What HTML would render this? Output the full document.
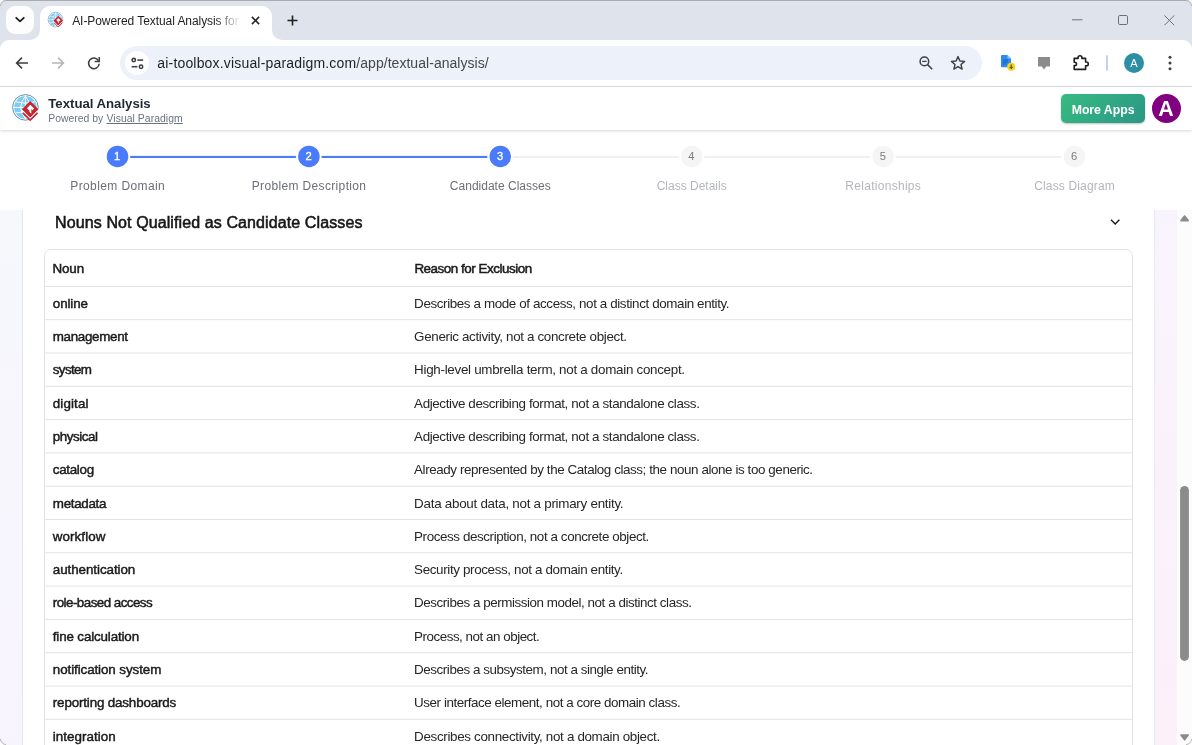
<!DOCTYPE html>
<html lang="en"><head><meta charset="utf-8"><title>AI-Powered Textual Analysis</title>
<style>
html,body{margin:0;padding:0;}
body{width:1192px;height:745px;overflow:hidden;position:relative;background:#fff;font-family:"Liberation Sans",sans-serif;}
.a{position:absolute;}
.t{position:absolute;white-space:nowrap;line-height:20px;height:20px;z-index:5;}
svg{position:absolute;overflow:visible;}
</style></head><body>
<!-- ===== browser chrome ===== -->
<div class="a" style="left:0;top:0;width:1192px;height:52px;background:#dfe3eb;"></div>
<div class="a" style="left:0;top:0;width:1192px;height:1px;background:#a9abae;"></div>
<!-- tab search button -->
<div class="a" style="left:6px;top:6px;width:28px;height:28px;border-radius:9px;background:#fdfdfe;"></div>
<svg style="left:14px;top:16px" width="12" height="8" viewBox="0 0 12 8"><path d="M2.2 1.8 L6 5.4 L9.8 1.8" fill="none" stroke="#1f1f1f" stroke-width="1.8" stroke-linecap="round" stroke-linejoin="round"/></svg>
<!-- active tab -->
<div class="a" style="left:40px;top:6px;width:232px;height:35px;background:#fff;border-radius:10px 10px 0 0;"></div>
<svg style="left:30px;top:30px" width="10" height="10" viewBox="0 0 10 10"><path d="M10 0 V10 H0 A10 10 0 0 0 10 0Z" fill="#fff"/></svg>
<svg style="left:272px;top:30px" width="10" height="10" viewBox="0 0 10 10"><path d="M0 0 V10 H10 A10 10 0 0 1 0 0Z" fill="#fff"/></svg>
<!-- toolbar -->
<div class="a" style="left:0;top:40px;width:1192px;height:46px;background:#fff;border-radius:9px 9px 0 0;"></div>
<div class="a" style="left:0;top:86px;width:1192px;height:1px;background:#dcdde0;"></div>
<!-- favicon -->
<svg style="left:0;top:0;z-index:3" width="80" height="40" viewBox="0 0 80 40"><g transform="translate(55.50 19.60) scale(0.5750)"><circle cx="0" cy="0" r="12.800" fill="#fff" stroke="#4f8398" stroke-width="0.9"/><circle cx="0" cy="0" r="11.3" fill="#7ecbf4"/><path d="M-11.3 0 H11.3 M0 -11.3 V11.3 M-9.800 -5.600 Q0 -2.800 9.800 -5.600 M-9.800 5.600 Q0 2.800 9.800 5.600 M0 -11.3 Q-9.500 0 0 11.3 M0 -11.3 Q9.500 0 0 11.3" fill="none" stroke="#fff" stroke-width="0.95"/><path d="M4.800 -7.200 L13.9 1.900 L4.800 15 L-4.300 1.900 Z" fill="#fff" opacity="0.0"/><path d="M4.800 -6.100 L12.800 1.900 L4.800 9.900 L-3.200 1.900 Z" fill="#c9242d"/><path d="M-3.600 4.300 L4.800 12.700 L13.200 4.300 L13.200 1.900 L4.800 10.300 L-3.600 1.900 Z" fill="#fff"/><path d="M4.800 -6.100 L12.800 1.900 L4.800 9.900 L-3.200 1.900 Z" fill="#c9242d"/><path d="M-2.500 5.400 L4.800 12.700 L12.100 5.400" fill="none" stroke="#c9242d" stroke-width="1.7"/><path d="M4.900 -2.600 L8.700 1.200 L7.100 2.800 L5.900 1.600 L5.900 6.300 L4.100 4.600 L4.100 3.400 L1.500 0.800 Z" fill="#fff"/></g></svg>
<!-- tab close -->
<svg style="left:251px;top:15.5px" width="9" height="9" viewBox="0 0 9 9"><path d="M0.9 0.9 L8.1 8.1 M8.1 0.9 L0.9 8.1" stroke="#1f1f1f" stroke-width="1.5" fill="none"/></svg>
<!-- fade on tab title -->
<div class="a" style="left:215px;top:10px;width:26px;height:22px;background:linear-gradient(90deg,rgba(255,255,255,0),#fff);z-index:6;"></div>
<!-- new tab plus -->
<svg style="left:286.5px;top:14.5px" width="11" height="11" viewBox="0 0 11 11"><path d="M5.5 0.5 V10.5 M0.5 5.5 H10.5" stroke="#1f1f1f" stroke-width="1.6" fill="none"/></svg>
<!-- window controls -->
<svg style="left:1071.5px;top:19px" width="11" height="2" viewBox="0 0 11 2"><path d="M0 0.8 H10.5" stroke="#6d7077" stroke-width="1"/></svg>
<svg style="left:1118px;top:15px" width="10" height="10" viewBox="0 0 10 10"><rect x="0.5" y="0.5" width="9" height="9" rx="1.3" fill="none" stroke="#6d7077" stroke-width="1"/></svg>
<svg style="left:1163.6px;top:14.6px" width="11" height="11" viewBox="0 0 11 11"><path d="M0.5 0.5 L10.2 10.2 M10.2 0.5 L0.5 10.2" stroke="#6d7077" stroke-width="1" fill="none"/></svg>
<!-- nav icons -->
<svg style="left:15px;top:56px" width="14" height="14" viewBox="0 0 14 14"><path d="M13 7 H2 M7 1.6 L1.6 7 L7 12.4" fill="none" stroke="#3c3f43" stroke-width="1.6" stroke-linejoin="miter"/></svg>
<svg style="left:51px;top:56px" width="14" height="14" viewBox="0 0 14 14"><path d="M1 7 H12 M7 1.6 L12.4 7 L7 12.4" fill="none" stroke="#b4b6ba" stroke-width="1.6"/></svg>
<svg style="left:0;top:0" width="120" height="90" viewBox="0 0 120 90"><path d="M98.500 60.700 A5.300 5.300 0 1 0 99.200 63.800" fill="none" stroke="#3c3f43" stroke-width="1.55"/><path d="M99.300 56.900 V61.500 H94.700" fill="none" stroke="#3c3f43" stroke-width="1.5"/></svg>
<!-- omnibox -->
<div class="a" style="left:120px;top:46px;width:862px;height:34px;border-radius:17px;background:#edf1fa;"></div>
<div class="a" style="left:125px;top:51px;width:24px;height:24px;border-radius:12px;background:#fff;"></div>
<svg style="left:130.5px;top:57px" width="12.8" height="12.800" viewBox="0 0 12 12"><g fill="none" stroke="#3c3f43" stroke-width="1.45"><circle cx="2.6" cy="2.9" r="1.6"/><path d="M6 2.9 H11.4"/><circle cx="9.4" cy="9.1" r="1.6"/><path d="M0.6 9.1 H6"/></g></svg>
<!-- zoom + star -->
<svg style="left:919px;top:56px" width="14" height="14" viewBox="0 0 14 14"><g fill="none" stroke="#3c3f43" stroke-width="1.5"><circle cx="5.4" cy="5.4" r="4.3"/><path d="M8.6 8.6 L13.2 13.2"/><path d="M3.2 5.4 H7.6" stroke-width="1.3"/></g></svg>
<svg style="left:950px;top:55px" width="16" height="16" viewBox="0 0 16 16"><path d="M8 1.6 L9.9 6 L14.6 6.4 L11 9.5 L12.1 14.1 L8 11.6 L3.9 14.1 L5 9.5 L1.4 6.4 L6.1 6 Z" fill="none" stroke="#3c3f43" stroke-width="1.4" stroke-linejoin="round"/></svg>
<!-- extension icons -->
<svg style="left:999px;top:54px" width="18" height="18" viewBox="0 0 18 18"><path d="M2 1.8 Q2 1 2.8 1 H8.5 L12 4.5 V12.5 Q12 13.3 11.2 13.3 H2.8 Q2 13.3 2 12.5 Z" fill="#2d8cf0"/><path d="M8.5 1 L12 4.5 H8.5Z" fill="#8cc4fb"/><path d="M3.8 6 H9 M3.8 8 H9 M3.8 10 H7" stroke="#1559a8" stroke-width="0.9"/><circle cx="12.2" cy="12.8" r="4" fill="#f7d11e"/><path d="M12.2 10.6 V14.4 M10.6 13 L12.2 14.6 L13.8 13" stroke="#333" stroke-width="1" fill="none"/></svg>
<svg style="left:1037px;top:56px" width="14" height="15" viewBox="0 0 14 15"><path d="M1 1 H13 V10.6 H9.2 L7 13.4 L4.8 10.6 H1 Z" fill="#8b8b8b"/></svg>
<svg style="left:1072px;top:54px" width="18" height="18" viewBox="0 0 18 18"><path d="M2.2 4.4 H6.1 V3.6 A1.9 1.9 0 0 1 9.9 3.6 V4.4 H13.6 V8 H14.4 A1.9 1.9 0 0 1 14.4 11.8 H13.6 V15.4 H2.2 V11.6 H2.8 A1.7 1.7 0 0 0 2.8 8.2 H2.2 Z" fill="none" stroke="#1f1f1f" stroke-width="1.6" stroke-linejoin="round"/></svg>
<div class="a" style="left:1106px;top:55px;width:2px;height:16px;background:#c4d3f5;border-radius:1px;"></div>
<div class="a" style="left:1124px;top:53px;width:20px;height:20px;border-radius:10px;background:#2d8fa3;"></div>
<svg style="left:1167.5px;top:55px" width="4" height="16" viewBox="0 0 4 16"><circle cx="2" cy="2.2" r="1.5" fill="#3c3f43"/><circle cx="2" cy="8" r="1.5" fill="#3c3f43"/><circle cx="2" cy="13.8" r="1.5" fill="#3c3f43"/></svg>

<!-- ===== app header ===== -->
<div class="a" style="left:0;top:87px;width:1192px;height:43px;background:#fff;box-shadow:0 1px 3px rgba(0,0,0,.16);z-index:2;"></div>
<svg style="left:0;top:0;z-index:3" width="60" height="130" viewBox="0 0 60 130"><g transform="translate(25.40 107.40) scale(1.0000)"><circle cx="0" cy="0" r="12.800" fill="#fff" stroke="#4f8398" stroke-width="0.9"/><circle cx="0" cy="0" r="11.3" fill="#7ecbf4"/><path d="M-11.3 0 H11.3 M0 -11.3 V11.3 M-9.800 -5.600 Q0 -2.800 9.800 -5.600 M-9.800 5.600 Q0 2.800 9.800 5.600 M0 -11.3 Q-9.500 0 0 11.3 M0 -11.3 Q9.500 0 0 11.3" fill="none" stroke="#fff" stroke-width="0.95"/><path d="M4.800 -7.200 L13.9 1.900 L4.800 15 L-4.300 1.900 Z" fill="#fff" opacity="0.0"/><path d="M4.800 -6.100 L12.800 1.900 L4.800 9.900 L-3.200 1.900 Z" fill="#c9242d"/><path d="M-3.600 4.300 L4.800 12.700 L13.200 4.300 L13.200 1.900 L4.800 10.300 L-3.600 1.900 Z" fill="#fff"/><path d="M4.800 -6.100 L12.800 1.900 L4.800 9.900 L-3.200 1.900 Z" fill="#c9242d"/><path d="M-2.500 5.400 L4.800 12.700 L12.100 5.400" fill="none" stroke="#c9242d" stroke-width="1.7"/><path d="M4.900 -2.600 L8.700 1.200 L7.100 2.800 L5.900 1.600 L5.900 6.300 L4.100 4.600 L4.100 3.400 L1.500 0.800 Z" fill="#fff"/></g></svg>
<div class="a" style="left:1061px;top:94px;width:84px;height:29px;border-radius:5px;background:linear-gradient(135deg,#38bb82,#2a9786);box-shadow:0 1px 2px rgba(0,0,0,.25);z-index:3;"></div>
<div class="a" style="left:1152px;top:94px;width:29px;height:29px;border-radius:15px;background:#800080;z-index:3;"></div>

<!-- ===== stepper ===== -->
<svg style="left:0;top:0" width="1192" height="745" viewBox="0 0 1192 745">
<rect x="130.2" y="155.9" width="165.7" height="2.1" fill="#4a7bfb"/>
<rect x="321.6" y="155.9" width="165.7" height="2.1" fill="#4a7bfb"/>
<rect x="513.0" y="155.9" width="165.7" height="2.1" fill="#f0f0f2"/>
<rect x="704.4" y="155.9" width="165.7" height="2.1" fill="#f0f0f2"/>
<rect x="895.8" y="155.9" width="165.7" height="2.1" fill="#f0f0f2"/>
<circle cx="117.5" cy="156.4" r="10.75" fill="#4a7bfb"/>
<circle cx="308.9" cy="156.4" r="10.75" fill="#4a7bfb"/>
<circle cx="500.3" cy="156.4" r="10.75" fill="#4a7bfb"/>
<circle cx="691.7" cy="156.4" r="10.75" fill="#f5f5f6"/>
<circle cx="883.1" cy="156.4" r="10.75" fill="#f5f5f6"/>
<circle cx="1074.5" cy="156.4" r="10.75" fill="#f5f5f6"/>
</svg>
<!-- ===== content ===== -->
<div class="a" style="left:0;top:210px;width:22px;height:535px;background:linear-gradient(180deg,#f6f8fc,#f8f4fe);border-right:1px solid #e1e8f2;"></div>
<div class="a" style="left:1154px;top:210px;width:23px;height:535px;background:linear-gradient(180deg,#f8f4fd,#fcf0f9);border-left:1px solid #e6e8f5;box-sizing:border-box;"></div>
<div class="a" style="left:1177px;top:210px;width:15px;height:535px;background:#fcfcfc;"></div>
<svg style="left:1179.9px;top:215.100px" width="9.2" height="6.6" viewBox="0 0 9.2 6.6"><path d="M4.6 1 L8.2 5.600 H1 Z" fill="#8b8b8b" stroke="#8b8b8b" stroke-width="1.6" stroke-linejoin="round"/></svg>
<svg style="left:1180px;top:734.200px" width="9.2" height="6.8" viewBox="0 0 9.2 6.8"><path d="M4.6 5.800 L8.2 1 H1 Z" fill="#8b8b8b" stroke="#8b8b8b" stroke-width="1.6" stroke-linejoin="round"/></svg>
<svg style="left:0;top:0" width="1192" height="745"><rect x="1180.100" y="485.9" width="8.8" height="175" rx="4.4" fill="#8b8b8b"/></svg>
<!-- chevron -->
<svg style="left:1110px;top:218.9px" width="11" height="7" viewBox="0 0 11 7"><path d="M1.500 1.300 L5.200 5 L8.900 1.300" fill="none" stroke="#161616" stroke-width="1.35" stroke-linecap="square" stroke-linejoin="miter"/></svg>
<!-- table -->
<div class="a" style="left:44px;top:249px;width:1089px;height:520px;border:1px solid #e3e4e7;border-radius:7px;box-sizing:border-box;"></div>
<svg style="left:0;top:0" width="1192" height="745" viewBox="0 0 1192 745"><rect x="45" y="285.90" width="1087" height="1" fill="#e2e3e7"/><rect x="45" y="319.20" width="1087" height="1" fill="#e2e3e7"/><rect x="45" y="352.50" width="1087" height="1" fill="#e2e3e7"/><rect x="45" y="385.80" width="1087" height="1" fill="#e2e3e7"/><rect x="45" y="419.10" width="1087" height="1" fill="#e2e3e7"/><rect x="45" y="452.40" width="1087" height="1" fill="#e2e3e7"/><rect x="45" y="485.70" width="1087" height="1" fill="#e2e3e7"/><rect x="45" y="519.00" width="1087" height="1" fill="#e2e3e7"/><rect x="45" y="552.30" width="1087" height="1" fill="#e2e3e7"/><rect x="45" y="585.60" width="1087" height="1" fill="#e2e3e7"/><rect x="45" y="618.90" width="1087" height="1" fill="#e2e3e7"/><rect x="45" y="652.20" width="1087" height="1" fill="#e2e3e7"/><rect x="45" y="685.50" width="1087" height="1" fill="#e2e3e7"/><rect x="45" y="718.80" width="1087" height="1" fill="#e2e3e7"/></svg>
<!-- window corners -->
<svg style="left:0;top:0;z-index:9" width="1192" height="745" viewBox="0 0 1192 745">
<path d="M0 0 H6 A6 6 0 0 0 0 6 Z" fill="#fff"/><path d="M0.500 6 A5.500 5.500 0 0 1 6 0.500" fill="none" stroke="#b5b5b5" stroke-width="1"/>
<path d="M1192 0 H1186 A6 6 0 0 1 1192 6 Z" fill="#fff"/><path d="M1191.500 6 A5.500 5.500 0 0 0 1186 0.500" fill="none" stroke="#b5b5b5" stroke-width="1"/>
<path d="M0 745 H6 A6 6 0 0 1 0 739 Z" fill="#fff"/><path d="M0.500 739 A5.500 5.500 0 0 0 6 744.500" fill="none" stroke="#b5b5b5" stroke-width="1"/>
<path d="M1192 745 H1186 A6 6 0 0 0 1192 739 Z" fill="#fff"/><path d="M1191.500 739 A5.500 5.500 0 0 1 1186 744.500" fill="none" stroke="#b5b5b5" stroke-width="1"/>
</svg>
<div id="tl" style="position:absolute;left:0;top:0;width:1192px;height:745px;z-index:5;will-change:transform;">
<span id="tabtitle" class="t" style="left:72.20px;top:11.00px;font-size:12px;letter-spacing:-0.068px;color:#1f1f1f;">AI-Powered Textual Analysis for</span>
<span id="url1" class="t" style="left:157.30px;top:53.20px;font-size:14px;letter-spacing:0.174px;color:#1f1f1f;">ai-toolbox.visual-paradigm.com</span>
<span id="url2" class="t" style="left:356.30px;top:53.20px;font-size:14px;letter-spacing:0.041px;color:#474747;">/app/textual-analysis/</span>
<span id="apptitle" class="t" style="left:48.30px;top:93.90px;font-size:13.2px;letter-spacing:-0.014px;font-weight:bold;color:#1f2733;">Textual Analysis</span>
<span id="powered" class="t" style="left:48.30px;top:109.10px;font-size:10.4px;letter-spacing:-0.008px;color:#6b7280;">Powered by</span>
<span id="vp" class="t" style="left:106.50px;top:109.10px;font-size:10.4px;letter-spacing:0.051px;color:#6b7280;text-decoration:underline;">Visual Paradigm</span>
<span id="moreapps" class="t" style="left:1071.70px;top:100.30px;font-size:12.3px;letter-spacing:-0.037px;font-weight:bold;color:#fff;">More Apps</span>
<span id="avA" class="t" style="left:1166.05px;top:98.55px;font-size:21.4px;letter-spacing:0.000px;font-weight:bold;color:#fff;transform:translateX(-50%);margin-left:0.000px;">A</span>
<span id="profA" class="t" style="left:1134.00px;top:53.20px;font-size:11px;letter-spacing:0.000px;color:#fff;transform:translateX(-50%);margin-left:0.000px;">A</span>
<span id="st0" class="t" style="left:117.50px;top:175.55px;font-size:12px;letter-spacing:0.387px;color:#6c6e78;transform:translateX(-50%);margin-left:0.194px;">Problem Domain</span>
<span id="sn0" class="t" style="left:117.20px;top:145.90px;font-size:11.2px;letter-spacing:0.000px;color:#fff;-webkit-text-stroke:0.3px #fff;transform:translateX(-50%);margin-left:0.000px;">1</span>
<span id="st1" class="t" style="left:308.90px;top:175.55px;font-size:12px;letter-spacing:0.347px;color:#6c6e78;transform:translateX(-50%);margin-left:0.173px;">Problem Description</span>
<span id="sn1" class="t" style="left:308.60px;top:145.90px;font-size:11.2px;letter-spacing:0.000px;color:#fff;-webkit-text-stroke:0.3px #fff;transform:translateX(-50%);margin-left:0.000px;">2</span>
<span id="st2" class="t" style="left:500.30px;top:175.55px;font-size:12px;letter-spacing:0.010px;color:#6c6e78;transform:translateX(-50%);margin-left:0.005px;">Candidate Classes</span>
<span id="sn2" class="t" style="left:500.00px;top:145.90px;font-size:11.2px;letter-spacing:0.000px;color:#fff;-webkit-text-stroke:0.3px #fff;transform:translateX(-50%);margin-left:0.000px;">3</span>
<span id="st3" class="t" style="left:691.70px;top:175.55px;font-size:12px;letter-spacing:-0.003px;color:#b3b6bd;transform:translateX(-50%);margin-left:-0.002px;">Class Details</span>
<span id="sn3" class="t" style="left:691.40px;top:145.90px;font-size:11.2px;letter-spacing:0.000px;color:#777a80;transform:translateX(-50%);margin-left:0.000px;">4</span>
<span id="st4" class="t" style="left:883.10px;top:175.55px;font-size:12px;letter-spacing:0.288px;color:#b3b6bd;transform:translateX(-50%);margin-left:0.144px;">Relationships</span>
<span id="sn4" class="t" style="left:882.80px;top:145.90px;font-size:11.2px;letter-spacing:0.000px;color:#777a80;transform:translateX(-50%);margin-left:0.000px;">5</span>
<span id="st5" class="t" style="left:1074.50px;top:175.55px;font-size:12px;letter-spacing:0.151px;color:#b3b6bd;transform:translateX(-50%);margin-left:0.075px;">Class Diagram</span>
<span id="sn5" class="t" style="left:1074.20px;top:145.90px;font-size:11.2px;letter-spacing:0.000px;color:#777a80;transform:translateX(-50%);margin-left:0.000px;">6</span>
<span id="heading" class="t" style="left:55.10px;top:212.80px;font-size:16px;letter-spacing:0.103px;color:#161616;-webkit-text-stroke:0.55px #161616;">Nouns Not Qualified as Candidate Classes</span>
<span id="thn" class="t" style="left:52.60px;top:259.10px;font-size:13.4px;letter-spacing:-0.172px;color:#1c1c1c;-webkit-text-stroke:0.5px #1a1a1a;">Noun</span>
<span id="thr" class="t" style="left:414.40px;top:259.10px;font-size:13.4px;letter-spacing:-0.460px;color:#1c1c1c;-webkit-text-stroke:0.5px #1a1a1a;">Reason for Exclusion</span>
<span id="n0" class="t" style="left:52.80px;top:293.70px;font-size:13.4px;letter-spacing:-0.110px;color:#1a1a1a;-webkit-text-stroke:0.45px #1a1a1a;">online</span>
<span id="r0" class="t" style="left:414.10px;top:293.70px;font-size:13.4px;letter-spacing:-0.383px;color:#262626;">Describes a mode of access, not a distinct domain entity.</span>
<span id="n1" class="t" style="left:52.80px;top:327.00px;font-size:13.4px;letter-spacing:-0.330px;color:#1a1a1a;-webkit-text-stroke:0.45px #1a1a1a;">management</span>
<span id="r1" class="t" style="left:414.10px;top:327.00px;font-size:13.4px;letter-spacing:-0.336px;color:#262626;">Generic activity, not a concrete object.</span>
<span id="n2" class="t" style="left:52.80px;top:360.30px;font-size:13.4px;letter-spacing:-0.644px;color:#1a1a1a;-webkit-text-stroke:0.45px #1a1a1a;">system</span>
<span id="r2" class="t" style="left:414.10px;top:360.30px;font-size:13.4px;letter-spacing:-0.290px;color:#262626;">High-level umbrella term, not a domain concept.</span>
<span id="n3" class="t" style="left:52.80px;top:393.60px;font-size:13.4px;letter-spacing:0.117px;color:#1a1a1a;-webkit-text-stroke:0.45px #1a1a1a;">digital</span>
<span id="r3" class="t" style="left:414.10px;top:393.60px;font-size:13.4px;letter-spacing:-0.380px;color:#262626;">Adjective describing format, not a standalone class.</span>
<span id="n4" class="t" style="left:52.80px;top:426.90px;font-size:13.4px;letter-spacing:-0.442px;color:#1a1a1a;-webkit-text-stroke:0.45px #1a1a1a;">physical</span>
<span id="r4" class="t" style="left:414.10px;top:426.90px;font-size:13.4px;letter-spacing:-0.380px;color:#262626;">Adjective describing format, not a standalone class.</span>
<span id="n5" class="t" style="left:52.80px;top:460.20px;font-size:13.4px;letter-spacing:-0.315px;color:#1a1a1a;-webkit-text-stroke:0.45px #1a1a1a;">catalog</span>
<span id="r5" class="t" style="left:414.10px;top:460.20px;font-size:13.4px;letter-spacing:-0.409px;color:#262626;">Already represented by the Catalog class; the noun alone is too generic.</span>
<span id="n6" class="t" style="left:52.80px;top:493.50px;font-size:13.4px;letter-spacing:-0.321px;color:#1a1a1a;-webkit-text-stroke:0.45px #1a1a1a;">metadata</span>
<span id="r6" class="t" style="left:414.10px;top:493.50px;font-size:13.4px;letter-spacing:-0.266px;color:#262626;">Data about data, not a primary entity.</span>
<span id="n7" class="t" style="left:52.80px;top:526.80px;font-size:13.4px;letter-spacing:0.072px;color:#1a1a1a;-webkit-text-stroke:0.45px #1a1a1a;">workflow</span>
<span id="r7" class="t" style="left:414.10px;top:526.80px;font-size:13.4px;letter-spacing:-0.408px;color:#262626;">Process description, not a concrete object.</span>
<span id="n8" class="t" style="left:52.80px;top:560.10px;font-size:13.4px;letter-spacing:-0.069px;color:#1a1a1a;-webkit-text-stroke:0.45px #1a1a1a;">authentication</span>
<span id="r8" class="t" style="left:414.10px;top:560.10px;font-size:13.4px;letter-spacing:-0.357px;color:#262626;">Security process, not a domain entity.</span>
<span id="n9" class="t" style="left:52.80px;top:593.40px;font-size:13.4px;letter-spacing:-0.548px;color:#1a1a1a;-webkit-text-stroke:0.45px #1a1a1a;">role-based access</span>
<span id="r9" class="t" style="left:414.10px;top:593.40px;font-size:13.4px;letter-spacing:-0.443px;color:#262626;">Describes a permission model, not a distinct class.</span>
<span id="n10" class="t" style="left:52.80px;top:626.70px;font-size:13.4px;letter-spacing:-0.153px;color:#1a1a1a;-webkit-text-stroke:0.45px #1a1a1a;">fine calculation</span>
<span id="r10" class="t" style="left:414.10px;top:626.70px;font-size:13.4px;letter-spacing:-0.478px;color:#262626;">Process, not an object.</span>
<span id="n11" class="t" style="left:52.80px;top:660.00px;font-size:13.4px;letter-spacing:-0.092px;color:#1a1a1a;-webkit-text-stroke:0.45px #1a1a1a;">notification system</span>
<span id="r11" class="t" style="left:414.10px;top:660.00px;font-size:13.4px;letter-spacing:-0.438px;color:#262626;">Describes a subsystem, not a single entity.</span>
<span id="n12" class="t" style="left:52.80px;top:693.30px;font-size:13.4px;letter-spacing:-0.161px;color:#1a1a1a;-webkit-text-stroke:0.45px #1a1a1a;">reporting dashboards</span>
<span id="r12" class="t" style="left:414.10px;top:693.30px;font-size:13.4px;letter-spacing:-0.442px;color:#262626;">User interface element, not a core domain class.</span>
<span id="n13" class="t" style="left:52.80px;top:726.60px;font-size:13.4px;letter-spacing:0.035px;color:#1a1a1a;-webkit-text-stroke:0.45px #1a1a1a;">integration</span>
<span id="r13" class="t" style="left:414.10px;top:726.60px;font-size:13.4px;letter-spacing:-0.329px;color:#262626;">Describes connectivity, not a domain object.</span>
</div>
</body></html>
